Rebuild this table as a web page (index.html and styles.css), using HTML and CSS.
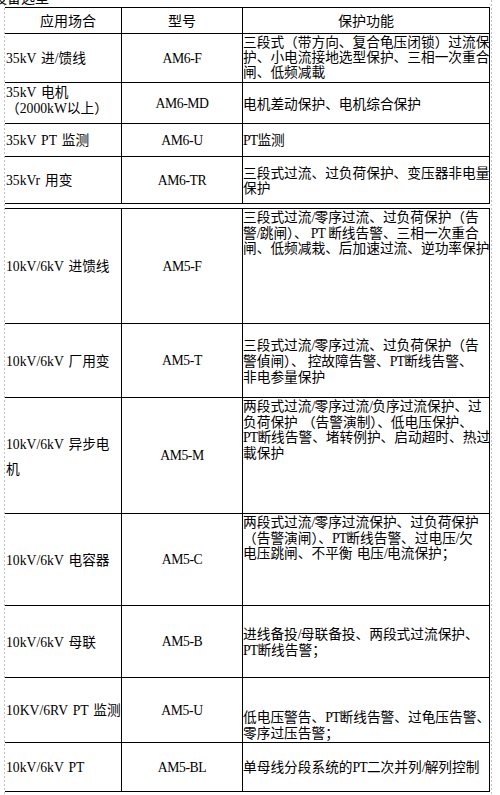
FILE: index.html
```html
<!DOCTYPE html>
<html lang="zh-CN">
<head>
<meta charset="utf-8">
<title>保护装置选型</title>
<link rel="stylesheet" href="styles.css">
</head>
<body>
<div class="page">
  <div class="caption"><span>设备选型</span></div>

  <div class="grid t1">
    <div class="c c1 hd hd1">应用场合</div>
    <div class="c c2 hd">型号</div>
    <div class="c c3 hd">保护功能</div>

    <div class="c c1"><div><span class="en">35kV </span>进<span class="en">/</span>馈线</div></div>
    <div class="c c2">AM6-F</div>
    <div class="c c3 top"><div>三段式（带方向、复合龟压闭锁）过流保<br>护、小电流接地选型保护、三相一次重合<br>闸、低频减載</div></div>

    <div class="c c1 up"><div><span class="en">35kV </span>电机<br>（<span class="en">2000kW</span>以上）</div></div>
    <div class="c c2">AM6-MD</div>
    <div class="c c3"><div>电机差动保护、电机综合保护</div></div>

    <div class="c c1"><div><span class="en">35kV PT </span>监测</div></div>
    <div class="c c2">AM6-U</div>
    <div class="c c3"><div><span class="en">PT</span>监测</div></div>

    <div class="c c1"><div><span class="en">35kVr </span>用变</div></div>
    <div class="c c2">AM6-TR</div>
    <div class="c c3"><div>三段式过流、过负荷保护、变压器非电量<br>保护</div></div>
  </div>

  <div class="grid t2">
    <div class="c c1"><div><span class="en">10kV/6kV </span>进馈线</div></div>
    <div class="c c2">AM5-F</div>
    <div class="c c3 top"><div>三段式过流<span class="en">/</span>零序过流、过负荷保护（告<br>警<span class="en">/</span>跳闸）、 <span class="en">PT</span> 断线告警、三相一次重合<br>闸、低频减栽、后加速过流、逆功率保护</div></div>

    <div class="c c1"><div><span class="en">10kV/6kV </span>厂用变</div></div>
    <div class="c c2">AM5-T</div>
    <div class="c c3"><div>三段式过流<span class="en">/</span>零序过流、过负荷保护（告<br>警偵闸）、 控故障告警、<span class="en">PT</span>断线告警、<br>非电参量保护</div></div>

    <div class="c c1 tall"><div><span class="en">10kV/6kV </span>异步电<br>机</div></div>
    <div class="c c2">AM5-M</div>
    <div class="c c3 top"><div>两段式过流<span class="en">/</span>零序过流<span class="en">/</span>负序过流保护、过<br>负荷保护<span class="en"> </span>（告警演制）、低电压保护、<br><span class="en">PT</span>断线告警、堵转例护、启动超时、热过<br>載保护</div></div>

    <div class="c c1"><div><span class="en">10kV/6kV </span>电容器</div></div>
    <div class="c c2">AM5-C</div>
    <div class="c c3 top"><div>两段式过流<span class="en">/</span>零序过流保护、过负荷保护<br>（告警演闸）、<span class="en">PT</span>断线告警、过电压<span class="en">/</span>欠<br>电压跳闸、不平衡<span class="en"> </span>电压<span class="en">/</span>电流保护；</div></div>

    <div class="c c1"><div><span class="en">10kV/6kV </span>母联</div></div>
    <div class="c c2">AM5-B</div>
    <div class="c c3"><div>进线备投<span class="en">/</span>母联备投、两段式过流保护、<br><span class="en">PT</span>断线告警；</div></div>

    <div class="c c1"><div><span class="en">10KV/6RV PT </span>监测</div></div>
    <div class="c c2">AM5-U</div>
    <div class="c c3 bot"><div>低电压警告、<span class="en">PT</span>断线告警、过龟压告警、<br>零序过压告警；</div></div>

    <div class="c c1"><div><span class="en">10kV/6kV PT</span></div></div>
    <div class="c c2">AM5-BL</div>
    <div class="c c3"><div>单母线分段系统的<span class="en">PT</span>二次并列<span class="en">/</span>解列控制</div></div>
  </div>
</div>
</body>
</html>
```

FILE: styles.css
```css
html, body {
  margin: 0;
  padding: 0;
  background: #ffffff;
}

body {
  font-family: "Noto Sans CJK SC", "Noto Sans", sans-serif;
  font-size: 13.7px;
  line-height: 15px;
  color: #000000;
}

.page {
  margin-left: 4px;
  width: 485px;
  padding: 0 2px 0 1px;
  min-height: 795px;
  background:
    repeating-linear-gradient(to bottom, #c2c2c2 0 2px, transparent 2px 4px) left top / 1px 100% no-repeat,
    repeating-linear-gradient(to bottom, #c2c2c2 0 2px, transparent 2px 4px) right top / 1px 100% no-repeat;
}

.caption {
  height: 7px;
  display: flow-root;
}

.caption span {
  display: block;
  margin: -10px 0 0 -12px;
  font-size: 14px;
  line-height: 14px;
  white-space: nowrap;
}

.grid {
  display: grid;
  grid-template-columns: 116px 121px 247px;
  width: 484px;
  border-top: 1px solid #000;
  border-right: 1px solid #000;
}

.t1 {
  grid-template-rows: 26px 49px 41px 33px 47px;
}

.t2 {
  margin-top: 4px;
  grid-template-rows: 115px 74px 116px 92px 72px 65px 49px;
}

.c {
  box-sizing: border-box;
  border-bottom: 1px solid #000;
  display: flex;
  flex-direction: column;
  justify-content: center;
  white-space: nowrap;
  min-width: 0;
}

.c1 {
  padding-left: 1px;
}

.c2 {
  border-left: 1px solid #000;
  align-items: center;
  font-family: "Liberation Serif", serif;
  font-size: 13.7px;
  letter-spacing: -0.4px;
}

.c3 {
  border-left: 1px solid #000;
  padding-left: 0;
}

.hd {
  align-items: center;
  font-family: "Noto Sans CJK SC", sans-serif;
  font-size: 14px;
  letter-spacing: 0;
}

.hd1 {
  padding-left: 10px;
}

.top {
  justify-content: flex-start;
}

.up {
  justify-content: flex-start;
  padding-top: 1px;
}

.bot {
  justify-content: flex-end;
  padding-bottom: 2px;
}

.tall {
  line-height: 25px;
}

.en {
  font-family: "Liberation Serif", serif;
  font-size: 13.7px;
  word-spacing: 1.5px;
  line-height: 1;
  white-space: pre;
}

.c3 .en {
  letter-spacing: -0.8px;
}
```
